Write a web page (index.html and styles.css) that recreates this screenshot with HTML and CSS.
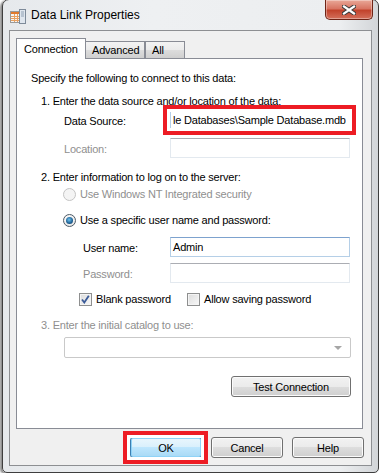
FILE: index.html
```html
<!DOCTYPE html>
<html lang="en">
<head>
    <meta charset="UTF-8">
    <meta name="viewport" content="width=device-width, initial-scale=1.0">
    <title>Data Link Properties</title>
    <link rel="stylesheet" href="styles.css">
</head>
<body>
    <div class="window">
        <div class="titlebar">
            <svg class="titlebar__icon" width="16" height="16" viewBox="0 0 16 16">
                <rect x="0.5" y="2.5" width="10" height="11" fill="#f4f4f4" stroke="#9a9a9a"/>
                <rect x="1" y="3" width="9" height="2" fill="#e07a2e"/>
                <path d="M1 7.5h9M1 9.5h9M1 11.5h9M4.5 5v8M7.5 5v8" stroke="#e8a060" stroke-width="1"/>
                <rect x="9.5" y="0.5" width="6" height="14" fill="#dfe6ee" stroke="#7d8a99"/>
                <path d="M11 3h3M11 5h3M11 7h3" stroke="#8fa0b3"/>
            </svg>
            <span class="titlebar__title">Data Link Properties</span>
            <div class="titlebar__close">
                <svg width="14" height="10" viewBox="0 0 14 10">
                    <path d="M2 1.5l10 7M12 1.5l-10 7" stroke="#3b3b3b" stroke-width="4.2" stroke-linecap="square"/>
                    <path d="M2 1.5l10 7M12 1.5l-10 7" stroke="#fff" stroke-width="2.2" stroke-linecap="square"/>
                </svg>
            </div>
        </div>

        <div class="client">
            <div class="tabs">
                <div class="tab tab--active">Connection</div>
                <div class="tab tab--advanced">Advanced</div>
                <div class="tab tab--all">All</div>
            </div>

            <div class="panel">
                <div class="line">Specify the following to connect to this data:</div>
                <div class="line step step--first">1. Enter the data source and/or location of the data:</div>

                <div class="field field--source">
                    <span class="field__label">Data Source:</span>
                    <div class="textbox textbox--active annotated">le Databases\Sample Database.mdb</div>
                </div>
                <div class="field field--location">
                    <span class="field__label is-disabled">Location:</span>
                    <div class="textbox"></div>
                </div>

                <div class="line step">2. Enter information to log on to the server:</div>
                <div class="option option--first">
                    <span class="radio radio--disabled"></span>
                    <span class="is-disabled">Use Windows NT Integrated security</span>
                </div>
                <div class="option">
                    <span class="radio radio--checked"></span>
                    <span>Use a specific user name and password:</span>
                </div>

                <div class="field field--login">
                    <span class="field__label">User name:</span>
                    <div class="textbox textbox--active">Admin</div>
                </div>
                <div class="field field--login field--password">
                    <span class="field__label is-disabled">Password:</span>
                    <div class="textbox"></div>
                </div>

                <div class="checks">
                    <label class="check check--blank">
                        <span class="checkbox">
                            <svg width="9" height="9" viewBox="0 0 9 9">
                                <path d="M1 4.5l2.3 3 L7.8 0.8" fill="none" stroke="#3a5a98" stroke-width="1.8"/>
                            </svg>
                        </span>
                        Blank password
                    </label>
                    <label class="check">
                        <span class="checkbox"></span>
                        Allow saving password
                    </label>
                </div>

                <div class="line step is-disabled">3. Enter the initial catalog to use:</div>
                <div class="combo">
                    <span class="combo__arrow"></span>
                </div>

                <div class="panel__actions">
                    <button class="btn btn--wide">Test Connection</button>
                </div>
            </div>

            <div class="dialog-buttons">
                <button class="btn btn--default annotated">OK</button>
                <button class="btn">Cancel</button>
                <button class="btn">Help</button>
            </div>
        </div>
    </div>
</body>
</html>
```

FILE: styles.css
```css
body {
    margin: 0;
    background-color: #ffffff;
    font-family: "Liberation Sans", Arial, sans-serif;
    font-size: 11px;
    letter-spacing: -0.2px;
    color: #000;
}

.window {
    box-sizing: border-box;
    width: 377px;
    height: 474px;
    margin: -1px 0 0 2px;
    padding: 0 6px 6px 6px;
    display: flex;
    flex-direction: column;
    border: 1px solid #3e3e3e;
    border-radius: 7px 7px 5px 5px;
    background: linear-gradient(to right, #e6e9ec, #eef0f2 40%, #eceef0 90%, #d2d5d8);
    box-shadow: -2px 1px 2px rgba(0, 0, 0, 0.45);
}

/* title bar */

.titlebar {
    height: 30px;
    display: flex;
    align-items: flex-start;
    flex-shrink: 0;
}

.titlebar__icon {
    margin: 9px 0 0 1px;
}

.titlebar__title {
    margin: 8px 0 0 5px;
    font-size: 12px;
    line-height: 14px;
    letter-spacing: 0;
}

.titlebar__close {
    box-sizing: border-box;
    width: 48px;
    height: 20px;
    margin: 0 -1px 0 auto;
    display: flex;
    align-items: center;
    justify-content: center;
    border: 1px solid #6e2416;
    border-top: none;
    border-radius: 0 0 5px 5px;
    background: linear-gradient(#e9a898, #d87563 45%, #c2432c 55%, #d4705b);
    box-shadow: inset 0 0 0 1px rgba(255, 255, 255, 0.35);
}

/* client area */

.client {
    flex: 1;
    display: flex;
    flex-direction: column;
    padding: 7px 8px 7px 6px;
    border: 1px solid #8d8f92;
    background-color: #f0f0f0;
}

.tabs {
    display: flex;
    align-items: flex-end;
    height: 21px;
    margin-bottom: -1px;
}

.tab {
    box-sizing: border-box;
    height: 18px;
    padding-left: 6px;
    display: flex;
    align-items: center;
    border: 1px solid #898c95;
    background: linear-gradient(#f3f3f3, #ebebeb 50%, #dddddd 50%, #cfcfcf);
}

.tab--active {
    position: relative;
    z-index: 1;
    width: 70px;
    height: 21px;
    padding: 0 0 1px 7px;
    border-bottom: none;
    background: #ffffff;
}

.tab--advanced {
    width: 60px;
    margin-left: -1px;
}

.tab--all {
    width: 40px;
}

.panel {
    flex: 1;
    padding: 12px 11px 0 14px;
    border: 1px solid #898c95;
    background-color: #ffffff;
}

.line {
    height: 14px;
    line-height: 14px;
}

.step {
    margin-top: 12px;
    padding-left: 10px;
}

.step--first {
    margin-top: 9px;
}

.is-disabled {
    color: #8f8f8f;
}

.field {
    height: 20px;
    margin-top: 8px;
    padding-left: 33px;
    display: flex;
    align-items: center;
}

.field--source {
    margin-top: 2px;
}

.field__label {
    width: 106px;
    padding-top: 1px;
}

.field--login {
    margin-top: 10px;
    padding-left: 52px;
}

.field--login .field__label {
    width: 87px;
}

.field--password {
    margin-top: 6px;
}

.textbox {
    box-sizing: border-box;
    position: relative;
    width: 180px;
    height: 20px;
    padding: 0 2px;
    line-height: 18px;
    white-space: nowrap;
    border: 1px solid #e3e9ef;
    border-top-color: #abadb3;
    background-color: #ffffff;
}

.textbox--active {
    border-color: #b5cfe7;
    border-top-color: #7da2ce;
}

.annotated::after {
    content: "";
    position: absolute;
    top: -7px;
    right: -7px;
    bottom: -7px;
    left: -8px;
    border: 4px solid #ed1c24;
    box-shadow: inset 0 0 0 3px #ffffff;
    pointer-events: none;
}

.field--source .annotated::after {
    top: -6px;
    bottom: -6px;
}

/* radios and checkboxes */

.option {
    height: 14px;
    margin-top: 12px;
    padding-left: 32px;
    display: flex;
    align-items: center;
    gap: 4px;
}

.option--first {
    margin-top: 3px;
}

.radio {
    box-sizing: border-box;
    position: relative;
    width: 13px;
    height: 13px;
    border-radius: 50%;
    border: 1px solid #8e8f8f;
    background: radial-gradient(circle at 40% 35%, #ffffff, #e0e0e0);
}

.radio--disabled {
    border-color: #c4c4c4;
    background: #f4f4f4;
}

.radio--checked {
    border-color: #4d5a66;
}

.radio--checked::after {
    content: "";
    position: absolute;
    top: 2px;
    left: 2px;
    width: 7px;
    height: 7px;
    border-radius: 50%;
    background: radial-gradient(circle at 45% 40%, #6fc3ef, #1d5f93 60%, #0c3357);
}

.checks {
    height: 14px;
    margin-top: 9px;
    padding-left: 48px;
    display: flex;
    align-items: center;
}

.check {
    display: flex;
    align-items: center;
    gap: 4px;
}

.check--blank {
    width: 108px;
}

.checkbox {
    box-sizing: border-box;
    width: 13px;
    height: 13px;
    display: flex;
    align-items: center;
    justify-content: center;
    border: 1px solid #8e8f8f;
    background: linear-gradient(135deg, #dcdcdc, #f8f8f8);
    box-shadow: inset 0 0 0 1px #f4f4f4;
}

.combo {
    box-sizing: border-box;
    position: relative;
    width: 287px;
    height: 21px;
    margin: 5px 0 0 33px;
    border: 1px solid #c9c9c9;
    border-radius: 2px;
    background-color: #ffffff;
}

.combo__arrow {
    position: absolute;
    top: 8px;
    right: 8px;
    border-left: 4px solid transparent;
    border-right: 4px solid transparent;
    border-top: 4px solid #a6a6a6;
}

.panel__actions {
    margin-top: 18px;
    display: flex;
    justify-content: flex-end;
}

/* buttons */

.btn {
    box-sizing: border-box;
    position: relative;
    width: 72px;
    height: 21px;
    padding: 0;
    font-family: "Liberation Sans", Arial, sans-serif;
    font-size: 11px;
    letter-spacing: -0.2px;
    color: #000;
    border: 1px solid #707070;
    border-radius: 3px;
    background: linear-gradient(#f2f2f2, #ebebeb 50%, #dddddd 50%, #cfcfcf);
    box-shadow: inset 0 0 0 1px #fbfbfb;
}

.btn--wide {
    width: 120px;
}

.btn--default {
    border-color: #3c7fb1;
    background: linear-gradient(#eaf6fd, #d9f0fc 50%, #bee6fd 50%, #a7d9f5);
    box-shadow: inset 0 0 0 1px #8fd3f7;
}

.dialog-buttons {
    margin: 8px -1px 0 0;
    display: flex;
    justify-content: flex-end;
    gap: 9px;
}
```
